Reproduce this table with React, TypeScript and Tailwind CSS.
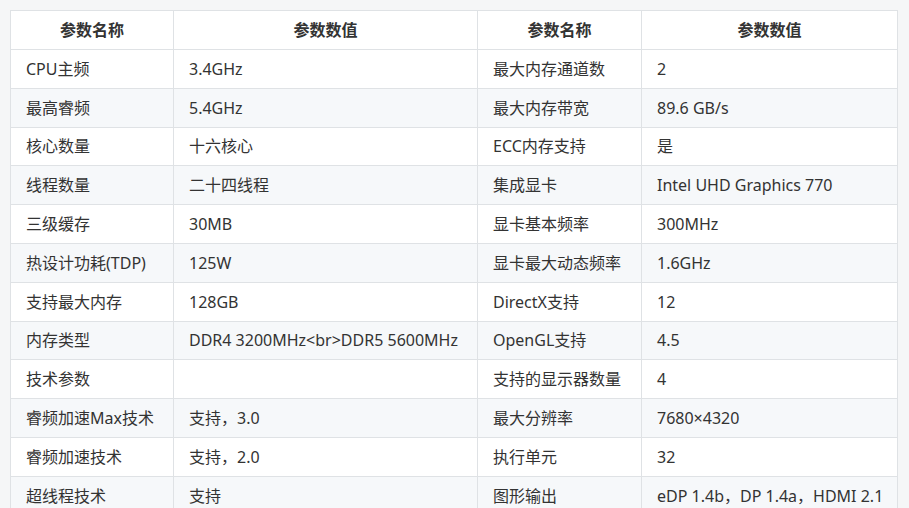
const rows: [string, string, string, string][] = [
  ["CPU主频", "3.4GHz", "最大内存通道数", "2"],
  ["最高睿频", "5.4GHz", "最大内存带宽", "89.6 GB/s"],
  ["核心数量", "十六核心", "ECC内存支持", "是"],
  ["线程数量", "二十四线程", "集成显卡", "Intel UHD Graphics 770"],
  ["三级缓存", "30MB", "显卡基本频率", "300MHz"],
  ["热设计功耗(TDP)", "125W", "显卡最大动态频率", "1.6GHz"],
  ["支持最大内存", "128GB", "DirectX支持", "12"],
  ["内存类型", "DDR4 3200MHz<br>DDR5 5600MHz", "OpenGL支持", "4.5"],
  ["技术参数", "", "支持的显示器数量", "4"],
  ["睿频加速Max技术", "支持，3.0", "最大分辨率", "7680×4320"],
  ["睿频加速技术", "支持，2.0", "执行单元", "32"],
  ["超线程技术", "支持", "图形输出", "eDP 1.4b，DP 1.4a，HDMI 2.1"],
];

export default function App() {
  return (
    <div
      className="h-[508px] w-[909px] overflow-hidden bg-[#f5f6f7] pl-[10px] pt-[10px] text-[16px] text-[#333]"
      style={{ fontFamily: '"Noto Sans", "Noto Sans CJK SC", sans-serif' }}
    >
      <table className="w-[887px] table-fixed border-collapse bg-white">
        <colgroup>
          <col className="w-[163px]" />
          <col className="w-[304px]" />
          <col className="w-[164px]" />
          <col className="w-[256px]" />
        </colgroup>
        <thead>
          <tr className="h-[39px]">
            {["参数名称", "参数数值", "参数名称", "参数数值"].map((h, i) => (
              <th key={i} className="border border-[#dfe2e5] px-[15px] text-center font-bold">
                {h}
              </th>
            ))}
          </tr>
        </thead>
        <tbody>
          {rows.map((r, i) => (
            <tr key={i} className={`h-[38.8px] ${i % 2 === 1 ? "bg-[#f6f8fa]" : "bg-white"}`}>
              {r.map((c, j) => (
                <td key={j} className="whitespace-nowrap border border-[#dfe2e5] px-[15px] leading-6">
                  {c}
                </td>
              ))}
            </tr>
          ))}
        </tbody>
      </table>
    </div>
  );
}
